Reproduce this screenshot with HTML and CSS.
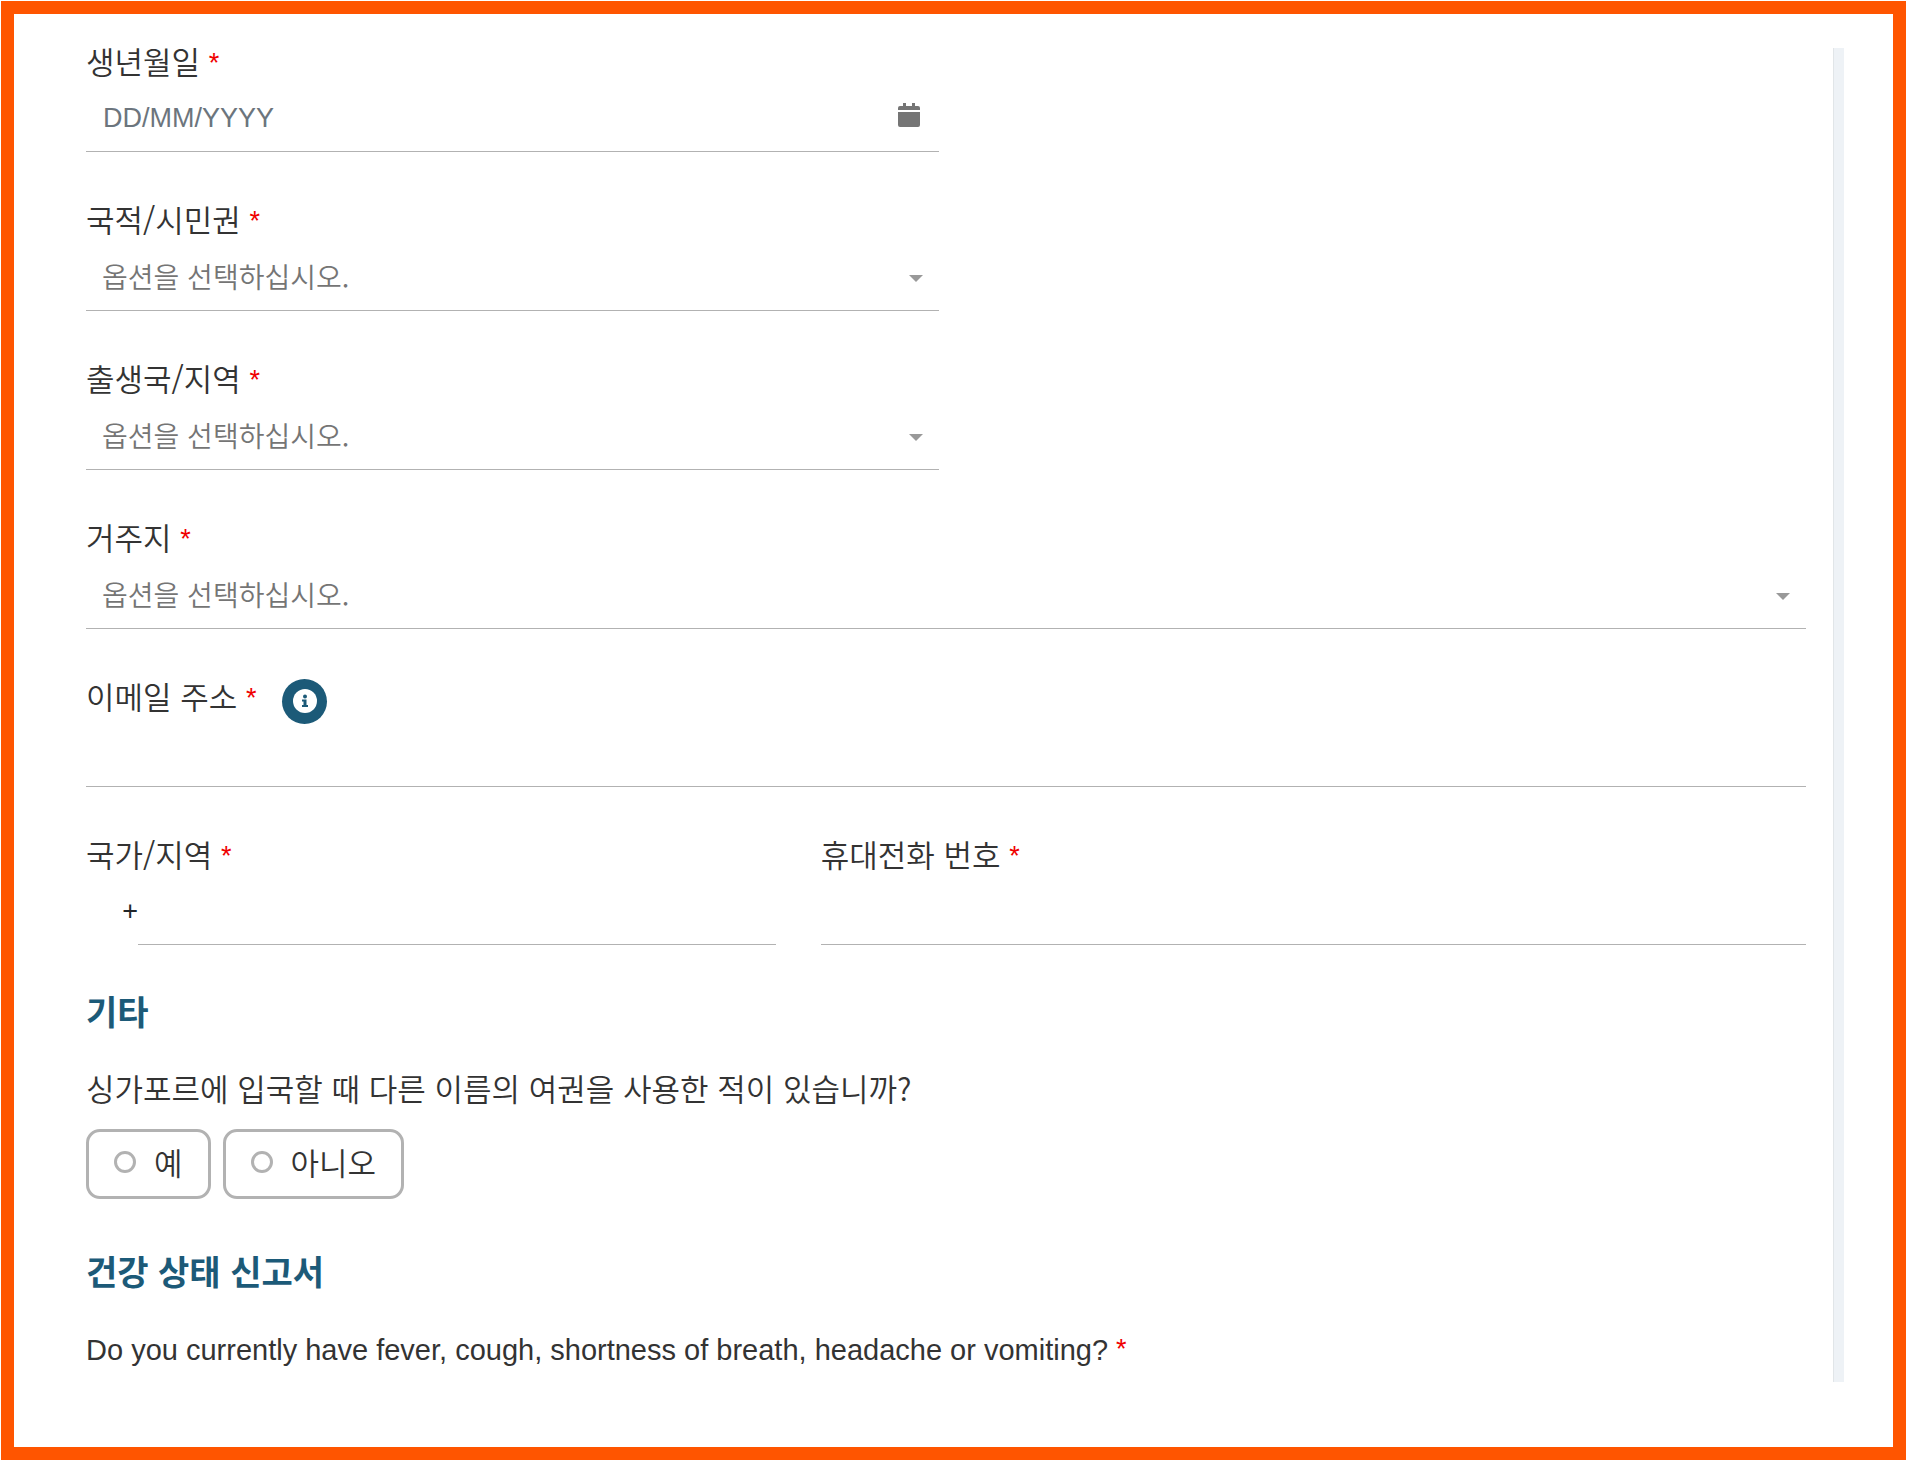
FILE: index.html
```html
<!DOCTYPE html>
<html lang="ko">
<head>
  <meta charset="UTF-8">
  <meta name="viewport" content="width=device-width, initial-scale=1.0">
  <title>입국 신고서</title>
  <link rel="stylesheet" href="styles.css">
</head>
<body>
  <div class="frame">
    <form class="form">
      <div class="row half">
        <div class="field">
          <label for="birth">생년월일 <span class="req">*</span></label>
          <div class="control">
            <input type="text" id="birth" placeholder="DD/MM/YYYY">
            <svg class="calendar" viewBox="0 0 22 24" aria-hidden="true">
              <path d="M5 0h3v3h6V0h3v3h3a2 2 0 0 1 2 2v2H0V5a2 2 0 0 1 2-2h3zM0 9h22v13a2 2 0 0 1-2 2H2a2 2 0 0 1-2-2z"/>
            </svg>
          </div>
        </div>
      </div>

      <div class="row half">
        <div class="field">
          <label for="nationality">국적/시민권 <span class="req">*</span></label>
          <div class="control">
            <select id="nationality"><option>옵션을 선택하십시오.</option></select>
            <svg class="arrow" viewBox="0 0 14 7" aria-hidden="true"><path d="M0 0h14L7 7z"/></svg>
          </div>
        </div>
      </div>

      <div class="row half">
        <div class="field">
          <label for="birthplace">출생국/지역 <span class="req">*</span></label>
          <div class="control">
            <select id="birthplace"><option>옵션을 선택하십시오.</option></select>
            <svg class="arrow" viewBox="0 0 14 7" aria-hidden="true"><path d="M0 0h14L7 7z"/></svg>
          </div>
        </div>
      </div>

      <div class="row">
        <div class="field">
          <label for="residence">거주지 <span class="req">*</span></label>
          <div class="control">
            <select id="residence"><option>옵션을 선택하십시오.</option></select>
            <svg class="arrow" viewBox="0 0 14 7" aria-hidden="true"><path d="M0 0h14L7 7z"/></svg>
          </div>
        </div>
      </div>

      <div class="row">
        <div class="field">
          <div class="label-row">
            <label for="email">이메일 주소 <span class="req">*</span></label>
            <button type="button" class="info" aria-label="이메일 안내">
              <svg viewBox="0 0 24 24" aria-hidden="true">
                <circle cx="12" cy="12" r="12" fill="#fff"/>
                <circle cx="12" cy="7.5" r="2"/>
                <path d="M9 10.5h4.5V16H15v2H9v-2h1.500v-3.500H9z"/>
              </svg>
            </button>
          </div>
          <div class="control">
            <input type="email" id="email">
          </div>
        </div>
      </div>

      <div class="row phone">
        <div class="field">
          <label for="country">국가/지역 <span class="req">*</span></label>
          <div class="control prefixed">
            <span class="prefix">+</span>
            <input type="text" id="country">
          </div>
        </div>
        <div class="field">
          <label for="mobile">휴대전화 번호 <span class="req">*</span></label>
          <div class="control">
            <input type="tel" id="mobile">
          </div>
        </div>
      </div>

      <h2>기타</h2>
      <fieldset>
        <legend>싱가포르에 입국할 때 다른 이름의 여권을 사용한 적이 있습니까?</legend>
        <div class="options">
          <label class="option"><input type="radio" name="othername">예</label>
          <label class="option"><input type="radio" name="othername">아니오</label>
        </div>
      </fieldset>

      <h2>건강 상태 신고서</h2>
      <p class="question" lang="en">Do you currently have fever, cough, shortness of breath, headache or vomiting? <span class="req">*</span></p>
    </form>
    <div class="track"></div>
  </div>
</body>
</html>
```
FILE: styles.css
```css
* {
  box-sizing: border-box;
}
body {
  margin: 0;
  padding: 1px;
  min-height: 100vh;
  display: flex;
  background-color: #fff;
  color: #333;
  font-family: "Noto Sans CJK KR", "Liberation Sans", sans-serif;
  font-size: 31px;
  font-weight: 350;
  line-height: 32px;
}
.frame {
  flex: 1;
  display: flex;
  gap: 27px;
  padding: 34px 49px 65px 72px;
  border: 13px solid #ff5500;
}
.form {
  flex: 1;
}
.row {
  display: grid;
  grid-template-columns: 1fr;
  margin-bottom: 54px;
}
.half {
  grid-template-columns: 1fr 1fr;
  gap: 14px;
}
.phone {
  grid-template-columns: 7fr 10fr;
  gap: 45px;
  margin-bottom: 46px;
}
.field label {
  display: block;
  line-height: 26px;
}
.req {
  color: #f00000;
  font-family: "Liberation Sans", sans-serif;
  font-size: 27px;
  line-height: 1px;
  vertical-align: 2px;
}
.control {
  position: relative;
  margin-top: 6px;
}
.control input,
.control select {
  appearance: none;
  display: block;
  width: 100%;
  height: 73px;
  padding: 3px 16px 0;
  border: 0;
  border-bottom: 1px solid #b2b2b2;
  border-radius: 0;
  background: none;
  color: #757575;
  font: inherit;
  font-size: 28px;
}
.control input {
  height: 72px;
  padding: 6px 17px 0;
  font-family: "Liberation Sans", "Noto Sans CJK KR", sans-serif;
  font-size: 27px;
}
.control input::placeholder {
  color: #6c757d;
}
.calendar {
  position: absolute;
  top: 23px;
  right: 19px;
  width: 22px;
  height: 24px;
  fill: #757575;
}
.arrow {
  position: absolute;
  top: 37px;
  right: 16px;
  width: 14px;
  height: 7px;
  fill: #999;
}
.label-row {
  display: flex;
  align-items: center;
  gap: 26px;
  height: 26px;
}
.info {
  display: flex;
  align-items: center;
  justify-content: center;
  width: 45px;
  height: 45px;
  padding: 0;
  margin-top: 10px;
  border: 0;
  border-radius: 50%;
  background-color: #1c5a78;
}
.info svg {
  width: 24px;
  height: 24px;
  fill: #1c5a78;
}
.prefixed {
  display: flex;
}
.prefix {
  flex: 0 0 52px;
  padding-top: 22px;
  color: #212529;
  font-family: "Liberation Sans", sans-serif;
  font-size: 27px;
  text-align: right;
}
.prefixed input {
  flex: 1;
  width: auto;
  min-width: 0;
}
h2 {
  margin: 0 0 43px;
  color: #1c5a78;
  font-size: 34px;
  font-weight: bold;
  line-height: 40px;
}
fieldset {
  margin: 0 0 52px;
  padding: 0;
  border: 0;
}
legend {
  padding: 0;
  margin-bottom: 27px;
  line-height: 28px;
}
.options {
  display: flex;
  gap: 12px;
}
.option {
  display: flex;
  align-items: center;
  gap: 18px;
  height: 70px;
  padding: 0 25px 4px;
  border: 3px solid #b2b2b2;
  border-radius: 14px;
}
.option input {
  appearance: none;
  width: 22px;
  height: 22px;
  margin: 0;
  border: 3px solid #b2b2b2;
  border-radius: 50%;
}
.option input:checked {
  background-color: #1c5a78;
}
.question {
  margin: 0;
  font-family: "Liberation Sans", sans-serif;
  font-size: 29px;
}
.track {
  width: 11px;
  border-left: 1px solid #e1e5e8;
  background-color: #eef2f6;
}
```
